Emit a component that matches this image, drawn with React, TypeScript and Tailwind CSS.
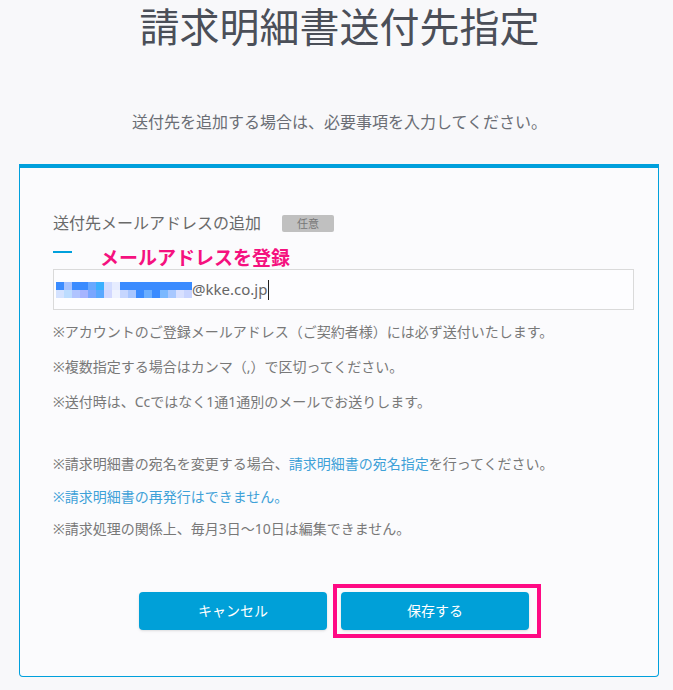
const font = { fontFamily: '"Noto Sans", "Noto Sans CJK JP", sans-serif' };

// モザイク (伏せ字) のセル色
const mosaicTop = [
  "#3a8bff", "#a6c2ff", "#3a8bff", "#3a8bff", "#68a8ff", "#3ab0ff", "#d2dcff", "#e6ecff",
  "#3a8bff", "#3a8bff", "#3a8bff", "#3a8bff", "#3a8bff", "#3a8bff", "#3a8bff", "#3a8bff", "#3a8bff",
];
const mosaicBottom = [
  "#d4e2ff", "#bcdcff", "#b0c4ff", "#a6b4ff", "#7aa6ff", "#5aa8ff", "#d2d8ff", "#eef2ff",
  "#c6d6ff", "#a8c6ff", "#3a8bff", "#6aaeff", "#3a8bff", "#7ab8ff", "#a8c8ff", "#d8e0ff", "#c8d4ff",
];

function Mosaic() {
  return (
    <div className="flex flex-col">
      <div className="flex">
        {mosaicTop.map((c, i) => (
          <div key={i} className="w-[8px] h-[8px]" style={{ backgroundColor: c }} />
        ))}
      </div>
      <div className="flex">
        {mosaicBottom.map((c, i) => (
          <div key={i} className="w-[8px] h-[8px]" style={{ backgroundColor: c }} />
        ))}
      </div>
    </div>
  );
}

export default function App() {
  return (
    <main className="min-h-screen bg-[#f8f8fa] pt-[7px] pb-[12px]" style={font}>
      <h1 className="text-center text-[40px] leading-[40px] text-[#4b4f58] pl-[6px]">
        請求明細書送付先指定
      </h1>
      <p className="mt-[63px] text-center text-[16px] leading-[24px] text-[#6b6e75] pl-[6px]">
        送付先を追加する場合は、必要事項を入力してください。
      </p>

      <section className="ml-[19px] mr-[14px] mt-[30px] bg-[#fbfbfd] border border-t-4 border-[#00a0dc] rounded-b-[4px] pl-[33px] pr-[24px] pt-[45px] pb-[46px]">
        {/* ラベル */}
        <div className="flex items-center h-[20px]">
          <span className="text-[16px] text-[#6a6a6a]">送付先メールアドレスの追加</span>
          <span className="ml-[21px] w-[52px] h-[17px] rounded-[2px] bg-[#c0c0c0] text-[11px] leading-[17px] text-[#777] text-center">
            任意
          </span>
        </div>

        <div className="flex items-start mt-[15px] h-[20px]">
          <div className="mt-[3px] w-[19px] h-[2px] bg-[#00a0dc]" />
          <span className="ml-[28px] text-[19px] leading-[20px] font-bold text-[#f5117f]">
            メールアドレスを登録
          </span>
        </div>

        {/* 入力欄 */}
        <div className="mt-[1px] h-[41px] border border-[#dadada] bg-[#fdfdff] flex items-center pl-[2px]">
          <Mosaic />
          <span className="text-[15px] text-[#666]">@kke.co.jp</span>
          <span className="ml-[1px] w-[1px] h-[20px] bg-[#222]" />
        </div>

        {/* 注意事項 */}
        <div className="mt-[4px] text-[14px] text-[#787878]">
          <p className="leading-[35px]">※アカウントのご登録メールアドレス（ご契約者様）には必ず送付いたします。</p>
          <p className="leading-[35px]">※複数指定する場合はカンマ（,）で区切ってください。</p>
          <p className="leading-[35px]">※送付時は、Ccではなく1通1通別のメールでお送りします。</p>
          <p className="mt-[29px] leading-[32.5px]">
            ※請求明細書の宛名を変更する場合、
            <a href="#" className="text-[#3ea1d8]">請求明細書の宛名指定</a>
            を行ってください。
          </p>
          <p className="leading-[32.5px] text-[#3ea1d8]">※請求明細書の再発行はできません。</p>
          <p className="leading-[32.5px]">※請求処理の関係上、毎月3日〜10日は編集できません。</p>
        </div>

        {/* ボタン */}
        <div className="mt-[46px] ml-[86px] flex items-center">
          <button className="w-[188px] h-[38px] rounded-[4px] bg-[#00a0d8] text-white text-[14px] shadow-sm">
            キャンセル
          </button>
          <div className="ml-[6px] -my-[8px] border-4 border-[#ff0a84] pl-[4px] pr-[8px] py-[4px]">
            <button className="w-[188px] h-[38px] rounded-[4px] bg-[#00a0d8] text-white text-[14px] shadow-sm block">
              保存する
            </button>
          </div>
        </div>
      </section>
    </main>
  );
}
